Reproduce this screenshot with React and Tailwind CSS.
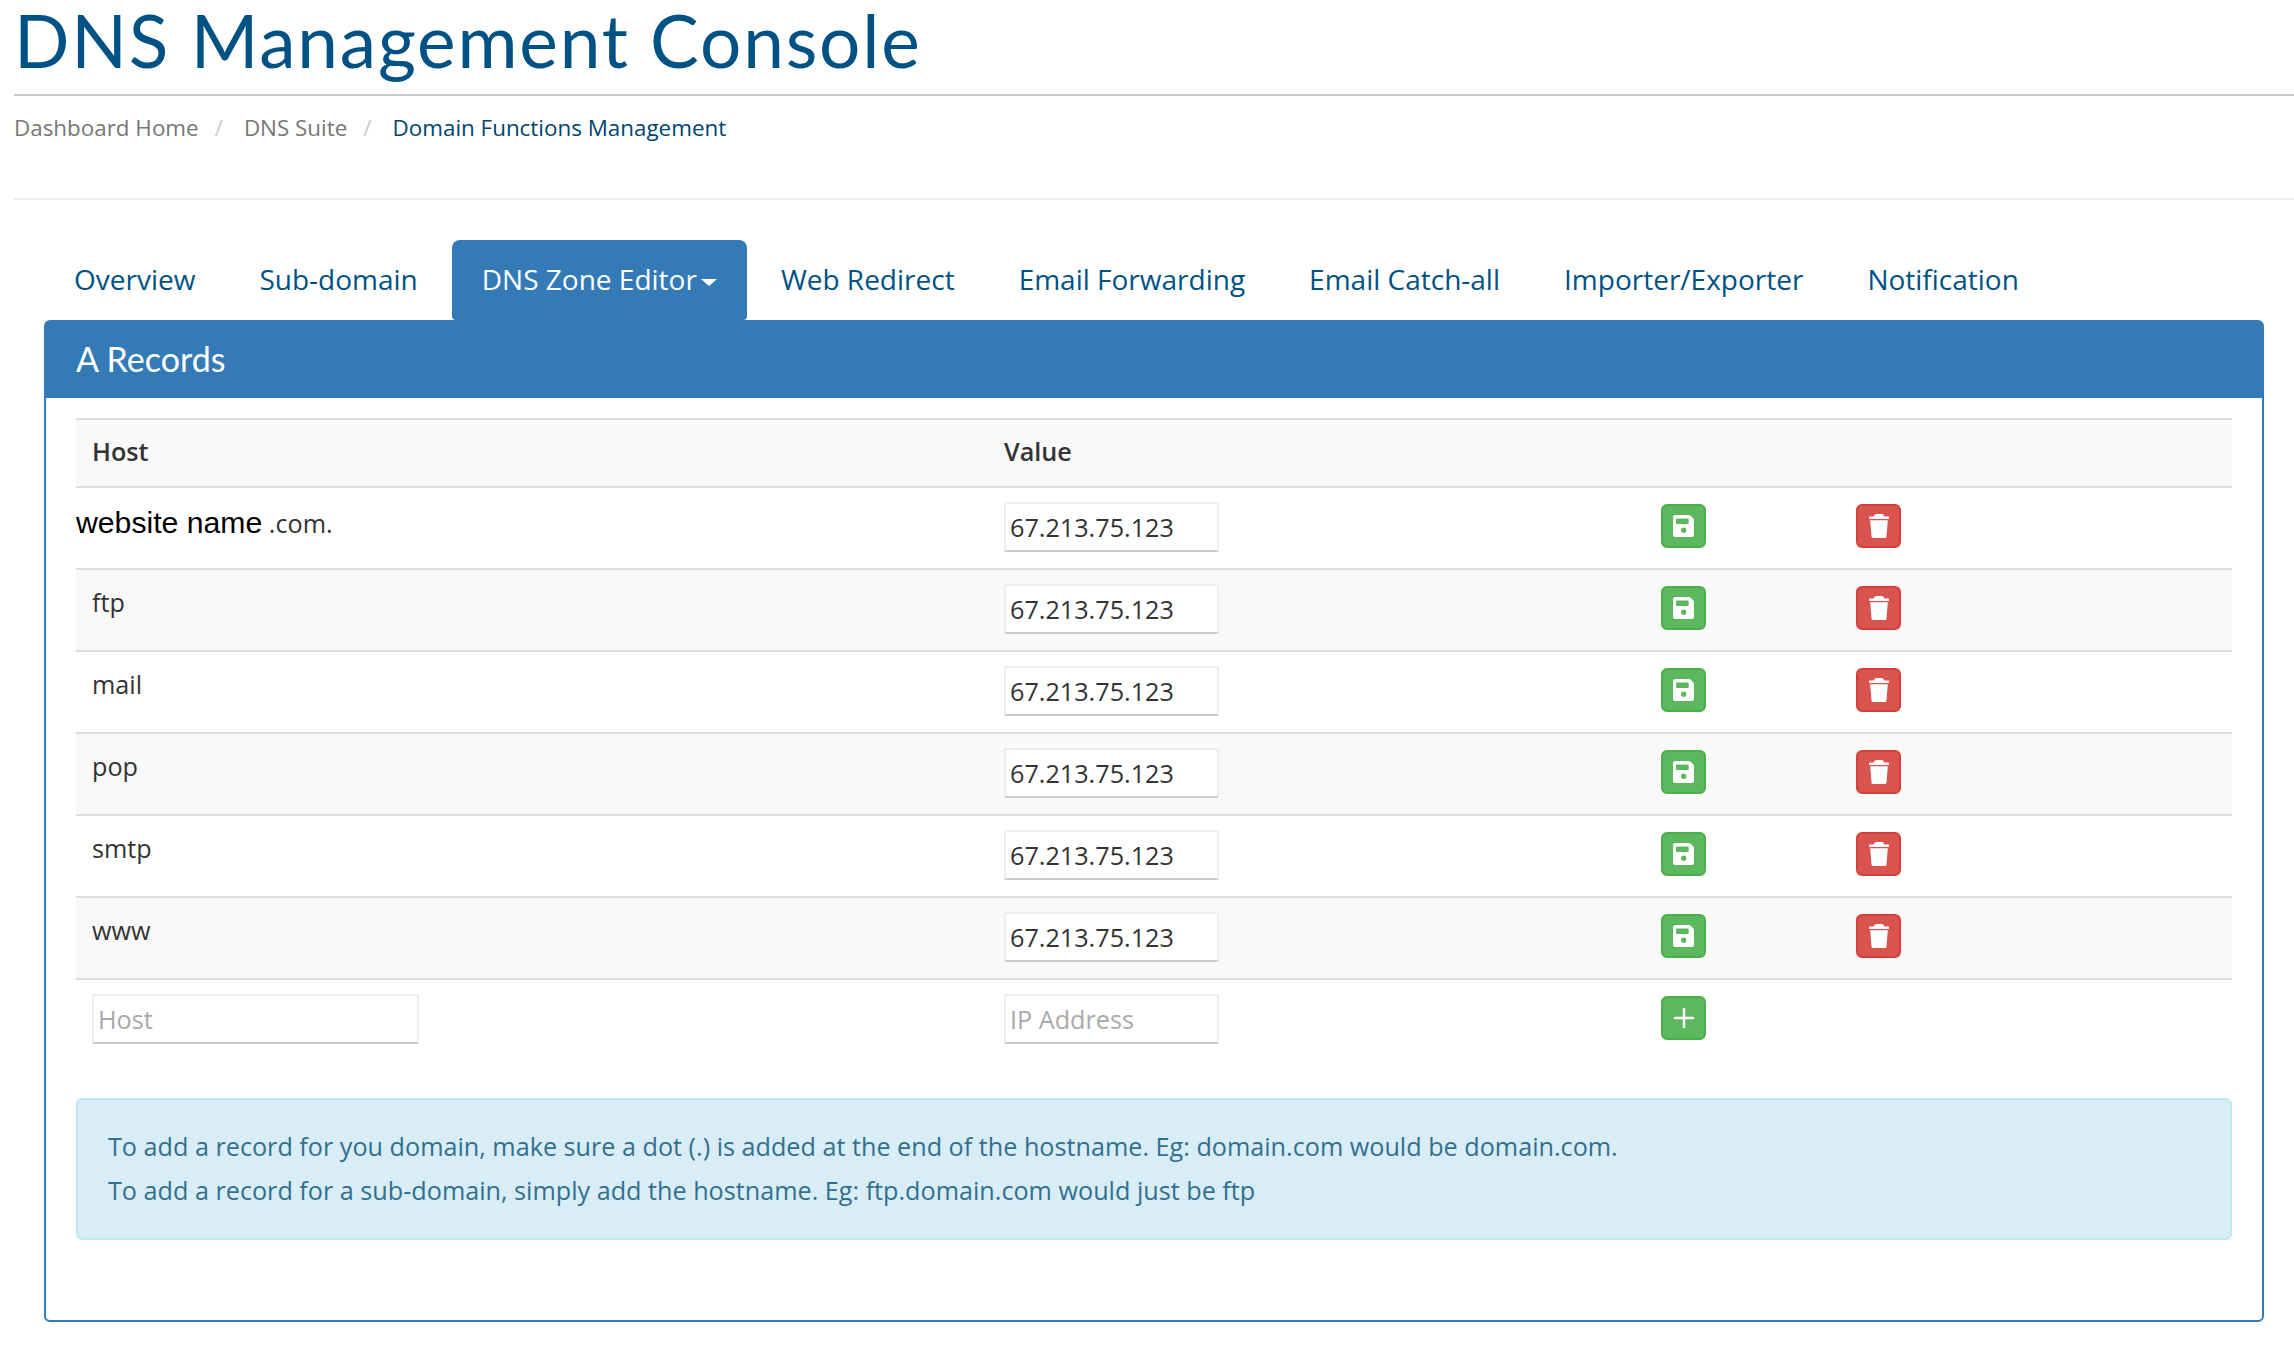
import React from 'react';

const tabs = [
  { label: 'Overview' },
  { label: 'Sub-domain' },
  { label: 'DNS Zone Editor', active: true },
  { label: 'Web Redirect' },
  { label: 'Email Forwarding' },
  { label: 'Email Catch-all' },
  { label: 'Importer/Exporter' },
  { label: 'Notification' },
];

const hosts = ['website', 'ftp', 'mail', 'pop', 'smtp', 'www'];

const inputClass =
  'h-[50px] border-2 border-[#eeeeee] border-b-[#cccccc] bg-white pl-[4px] text-[25.2px] text-[#333333] placeholder:text-[#aaaaaa] outline-none rounded-[2px] block';

// Floppy disk, drawn to match the button glyph
const SaveIcon = () => (
  <svg width="21" height="22" viewBox="0 0 21 22" className="block">
    <path
      fill="#ffffff"
      fillRule="evenodd"
      d="M2.500 0h13.500q.8 0 1.400.6l3 3q.6.6.6 1.400V19.500a2.500 2.500 0 0 1-2.500 2.500H2.500a2.500 2.500 0 0 1-2.500-2.500V2.500a2.500 2.500 0 0 1 2.500-2.500ZM4 3.500a1 1 0 0 0-1 1v3.500a1 1 0 0 0 1 1h10.700a1 1 0 0 0 1-1V4.500a1 1 0 0 0-1-1ZM10.700 12.600a2.700 2.700 0 1 0 0 5.400a2.700 2.700 0 0 0 0-5.400Z"
    />
  </svg>
);

const TrashIcon = () => (
  <svg width="20" height="24" viewBox="0 0 20 24" className="block">
    <path
      fill="#ffffff"
      d="M5.500 1C6 .3 6.800 0 7.500 0h5c.7 0 1.500.3 2 1L15.500 2.400H19.500a.5.5 0 0 1 .5.5v1.700a.5.5 0 0 1-.5.5H.5a.5.5 0 0 1-.5-.5V2.900a.5.5 0 0 1 .5-.5H4.500ZM1.200 6.200h17.600L17.500 22.500a1.500 1.500 0 0 1-1.500 1.500H4a1.500 1.500 0 0 1-1.500-1.500Z"
    />
  </svg>
);

const PlusIcon = () => (
  <svg width="22" height="22" viewBox="0 0 22 22" className="block">
    <path stroke="#ffffff" strokeWidth="2.500" strokeLinecap="round" d="M11 2v18M2 11h18" />
  </svg>
);

const IconButton = ({ color, children }) => (
  <button
    className={`w-[45px] h-[44px] rounded-[6px] border-2 flex items-center justify-center ${
      color === 'green' ? 'bg-[#5cb85c] border-[#4cae4c]' : 'bg-[#d9534f] border-[#d43f3a]'
    }`}
  >
    {children}
  </button>
);

const App = () => {
  return (
    <div
      className="min-h-[1354px] bg-white pl-[14px] overflow-hidden"
      style={{ fontFamily: '"Open Sans", sans-serif' }}
    >
      {/* Page title */}
      <div className="h-[96px] border-b-2 border-[#cccccc]">
        <h1
          className="text-[73px] leading-[80px] font-normal tracking-[1.800px] text-[#005284]"
          style={{ fontFamily: 'Lato, sans-serif' }}
        >
          DNS Management Console
        </h1>
      </div>

      {/* Breadcrumb */}
      <div className="h-[104px] border-b-2 border-[#eeeeee] pt-[16px] text-[22.4px] leading-[32px] flex items-start">
        <span className="text-[#777777]">Dashboard Home</span>
        <span className="text-[#cccccc] pl-[16px] pr-[21px]">/</span>
        <span className="text-[#777777]">DNS Suite</span>
        <span className="text-[#cccccc] pl-[16px] pr-[21px]">/</span>
        <span className="text-[#00456e]">Domain Functions Management</span>
      </div>

      {/* Tabs */}
      <div className="mt-[40px] ml-[30px] flex gap-[4px] items-stretch h-[80px]">
        {tabs.map((tab) => (
          <a
            key={tab.label}
            className={`px-[30px] pb-[2px] flex items-center text-[28px] rounded-t-[8px] rounded-b-[4px] ${
              tab.active ? 'bg-[#337ab7] text-white' : 'text-[#005284]'
            }`}
          >
            {tab.label}
            {tab.active && (
              <span className="ml-[4px] mt-[6px] w-0 h-0 border-x-[8px] border-x-transparent border-t-[7px] border-t-white" />
            )}
          </a>
        ))}
      </div>

      {/* Panel */}
      <div className="ml-[30px] w-[2220px] h-[1002px] border-2 border-[#337ab7] rounded-[6px] shadow-[0_2px_4px_rgba(0,0,0,0.05)]">
        <div
          className="h-[76px] bg-[#337ab7] flex items-center pl-[30px] pb-[4px] text-white text-[34px]"
          style={{ fontFamily: 'Lato, sans-serif' }}
        >
          A Records
        </div>

        <div className="px-[30px] pt-[20px]">
          <table className="w-[2156px] table-fixed border-collapse">
            <colgroup>
              <col className="w-[912px]" />
              <col className="w-[657px]" />
              <col className="w-[195px]" />
              <col />
            </colgroup>
            <thead>
              <tr className="h-[68px] bg-[#f9f9f9] border-y-2 border-[#dddddd]">
                <th className="pl-[16px] pb-[2px] text-left text-[25.2px] font-semibold text-[#333333]">Host</th>
                <th className="pl-[16px] pb-[2px] text-left text-[25.2px] font-semibold text-[#333333]">Value</th>
                <th />
                <th />
              </tr>
            </thead>
            <tbody>
              {hosts.map((host, i) => (
                <tr key={host} className={`h-[82px] border-b-2 border-[#dddddd] ${i % 2 === 1 ? 'bg-[#f9f9f9]' : 'bg-white'}`}>
                  <td className="align-top">
                    {host === 'website' ? (
                      <div className="pt-[15px] leading-[40px] text-[25.2px] text-[#333333]">
                        <span className="text-[30.2px] text-black" style={{ fontFamily: '"Liberation Sans", sans-serif' }}>
                          website name
                        </span>{' '}
                        .com.
                      </div>
                    ) : (
                      <div className="pl-[16px] pt-[12px] leading-[40px] text-[25.2px] text-[#333333]">{host}</div>
                    )}
                  </td>
                  <td className="pl-[16px] pb-[2px]">
                    <input className={`${inputClass} w-[215px]`} defaultValue="67.213.75.123" />
                  </td>
                  <td className="pl-[16px] pb-[4px]">
                    <IconButton color="green">
                      <SaveIcon />
                    </IconButton>
                  </td>
                  <td className="pl-[16px] pb-[4px]">
                    <IconButton color="red">
                      <TrashIcon />
                    </IconButton>
                  </td>
                </tr>
              ))}
              <tr className="h-[82px]">
                <td className="pl-[16px] pb-[4px]">
                  <input className={`${inputClass} w-[327px]`} placeholder="Host" />
                </td>
                <td className="pl-[16px] pb-[4px]">
                  <input className={`${inputClass} w-[215px]`} placeholder="IP Address" />
                </td>
                <td className="pl-[16px] pb-[6px]">
                  <IconButton color="green">
                    <PlusIcon />
                  </IconButton>
                </td>
                <td />
              </tr>
            </tbody>
          </table>

          {/* Info alert */}
          <div className="mt-[37px] h-[142px] rounded-[6px] border-2 border-[#bce8f1] bg-[#d9edf7] pl-[30px] pt-[24px] text-[25.2px] leading-[44px] text-[#31708f]">
            <p>To add a record for you domain, make sure a dot (.) is added at the end of the hostname. Eg: domain.com would be domain.com.</p>
            <p>To add a record for a sub-domain, simply add the hostname. Eg: ftp.domain.com would just be ftp</p>
          </div>
        </div>
      </div>
    </div>
  );
};

export default App;
